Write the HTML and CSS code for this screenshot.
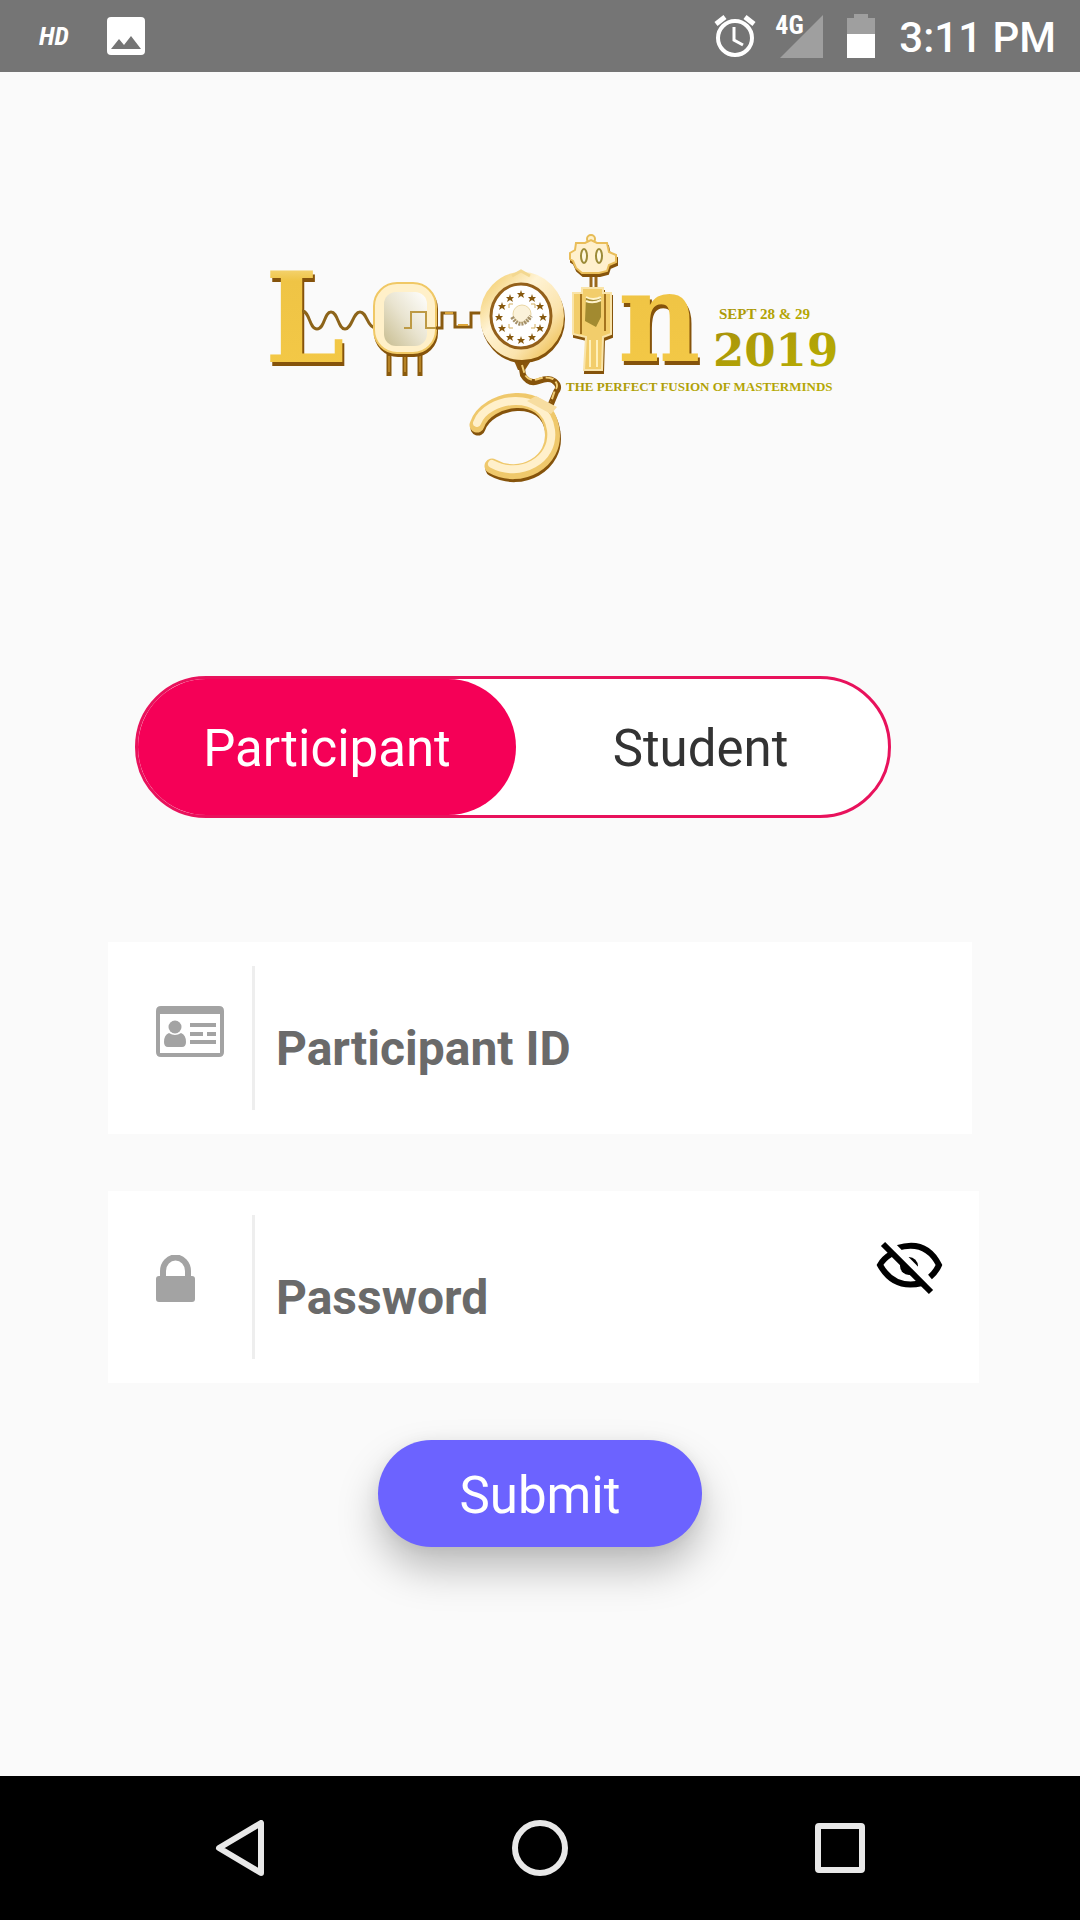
FILE: index.html
```html
<!DOCTYPE html>
<html lang="en">
<head>
<meta charset="utf-8">
<meta name="viewport" content="width=device-width, initial-scale=1">
<title>Login 2019</title>
<link rel="stylesheet" href="styles.css">
</head>
<body>
<header class="status">
  <span class="status-hd">HD</span>
  <svg class="status-image" viewBox="0 0 38 38" width="38" height="38" aria-hidden="true">
    <rect width="38" height="38" rx="4" fill="#fff"/>
    <path d="M4 32L12 22L17 28L24 19L34 32Z" fill="#757575"/>
  </svg>
  <div class="status-right">
    <svg class="status-alarm" viewBox="0 0 42 44" width="42" height="44" aria-hidden="true" fill="none" stroke="#fff">
      <circle cx="21" cy="24" r="17" stroke-width="4"/>
      <path d="M2 10L11 3M40 10L31 3" stroke-width="5"/>
      <path d="M20 13V26L29 31" stroke-width="3"/>
    </svg>
    <div class="signal">
      <svg viewBox="0 0 43 43" width="43" height="43" aria-hidden="true"><path d="M0 43L43 0V43Z" fill="#9f9f9f"/></svg>
      <span class="signal-label">4G</span>
    </div>
    <svg class="status-battery" viewBox="0 0 28 44" width="28" height="44" aria-hidden="true">
      <path d="M7 0H21V4H28V20H0V4H7Z" fill="#9f9f9f"/>
      <path d="M0 20H28V44H0Z" fill="#fff"/>
    </svg>
    <time class="status-time">3:11 PM</time>
  </div>
</header>

<main class="page">
  <svg class="logo" viewBox="264 228 580 258" role="img" aria-label="Login 2019">
    <defs>
      <linearGradient id="gold" x1="0" y1="0" x2="0" y2="1">
        <stop offset="0" stop-color="#fff2cc"/><stop offset=".25" stop-color="#efc445"/><stop offset=".85" stop-color="#f3c846"/><stop offset="1" stop-color="#f8d878"/>
      </linearGradient>
      <linearGradient id="pale" x1="0" y1="0" x2="1" y2="1">
        <stop offset="0" stop-color="#f3cd6c"/><stop offset=".35" stop-color="#fff3d4"/><stop offset=".7" stop-color="#fbe4ae"/><stop offset="1" stop-color="#eebe50"/>
      </linearGradient>
      <linearGradient id="chip" x1="1" y1="0" x2="0" y2="1">
        <stop offset="0" stop-color="#fff"/><stop offset=".5" stop-color="#e9e4d0"/><stop offset="1" stop-color="#c8bd90"/>
      </linearGradient>
      <linearGradient id="olive" x1="0" y1="0" x2="1" y2="1">
        <stop offset="0" stop-color="#a8920c"/><stop offset="1" stop-color="#b9b000"/>
      </linearGradient>
      <path id="star" d="M0 -4L1 -1L4 -1L2 1L3 4L0 2L-3 4L-2 1L-4 -1L-1 -1Z"/>
    </defs>

    <text class="logo-letter" x="265" y="362">L</text>
    <text class="logo-letter" x="618" y="361">n</text>

    <path d="M302 311C310 311 309 329 317 329S324 312 331 312S338 329 345 329S353 312 360 312S367 327 375 328" fill="none" stroke="#8d641a" stroke-width="3"/>

    <!-- chip with its legs and pulse -->
    <path d="M389 354V376M405 354V376M420 354V376" stroke="#8a5a0c" stroke-width="5"/>
    <path d="M389 356V372M405 356V372M420 356V372" stroke="#e0a93c" stroke-width="1"/>
    <rect class="bevel" x="374" y="283" width="62" height="70" rx="23" fill="#fff0c9" stroke="#f0c865" stroke-width="2"/>
    <rect x="384" y="292" width="43" height="54" rx="12" fill="url(#chip)"/>
    <path d="M404 328H411V312H426V328H436" fill="none" stroke="#bd9a45" stroke-width="2"/>
    <path d="M436 328H442V313H455V327H471V313H483" fill="none" stroke="#8a5b10" stroke-width="3"/>
    <path d="M445 313H453M458 325H468" stroke="#dca63b" stroke-width="2"/>

    <!-- upper cuff -->
    <path d="M512 356H534L525 370H518Z" fill="#8a560e"/>
    <ellipse class="bevel" cx="522" cy="316" rx="36" ry="38" fill="#fff" stroke="url(#pale)" stroke-width="12"/>
    <ellipse cx="521" cy="316" rx="30" ry="32" fill="#fff" stroke="#94601a" stroke-width="3"/>
    <path d="M512 276L521 271L530 276" fill="none" stroke="#f3d891" stroke-width="3"/>
    <g fill="#87590f">
      <use href="#star" x="521" y="294"/><use href="#star" x="532" y="298"/><use href="#star" x="540" y="306"/>
      <use href="#star" x="543" y="317"/><use href="#star" x="540" y="328"/><use href="#star" x="532" y="337"/>
      <use href="#star" x="521" y="340"/><use href="#star" x="510" y="337"/><use href="#star" x="502" y="328"/>
      <use href="#star" x="499" y="317"/><use href="#star" x="502" y="306"/><use href="#star" x="510" y="298"/>
    </g>
    <circle cx="522" cy="314" r="9" fill="#fbf2da" stroke="#ead7a5"/>
    <path d="M512 317Q521 331 531 316" fill="none" stroke="#a5916a" stroke-width="4" stroke-dasharray="2 1"/>
    <path d="M509 308V304H513M531 304H535V308M509 324V328H513M531 328H535V324" fill="none" stroke="#d1ad5e"/>

    <!-- chain and lower cuff -->
    <path d="M521 363L523 375Q529 385 539 381T554 381Q561 386 556 392L551 404" fill="none" stroke="#86530a" stroke-width="6" stroke-linecap="round"/>
    <path d="M522 365L525 375Q530 382 538 379T553 379Q560 385 555 390L551 402" fill="none" stroke="#f1cd76" stroke-width="2" stroke-dasharray="8 3"/>
    <path class="bevel" d="M477 425C486 397 547 386 552 430C557 462 520 482 492 466" fill="none" stroke="#efc86b" stroke-width="15" stroke-linecap="round"/>
    <path d="M477 423C486 397 545 388 551 430C555 460 520 479 492 464" fill="none" stroke="#fff0cb" stroke-width="8" stroke-linecap="round"/>
    <path d="M536 396L557 407L551 414L527 401Z" fill="#f7dda0"/>

    <!-- robot -->
    <path d="M591 275V289M596 275V289" stroke="#9a681b" stroke-width="3"/>
    <circle cx="591" cy="239" r="4" fill="#fff1c9" stroke="#e6bc57" stroke-width="2"/>
    <path class="bevel" d="M576 243H585L591 240L597 243H607L609 252L616 255V262L609 265L607 271L599 273H582L576 268L573 261L570 259V253L575 250Z" fill="#fff0cd" stroke="#e9bd59" stroke-width="2"/>
    <ellipse cx="584" cy="256" rx="3" ry="7" fill="#fff8df" stroke="#9c8b38" stroke-width="2"/>
    <ellipse cx="599" cy="256" rx="3" ry="7" fill="#fff8df" stroke="#9c8b38" stroke-width="2"/>
    <path class="bevel" d="M573 293H582V288H603V293H611V334L603 337L602 370H584L586 337L573 334Z" fill="#f2cd6b" stroke="#f9e4aa" stroke-width="2"/>
    <path d="M581 294V334M605 294V331" stroke="#a4731e" stroke-width="2"/>
    <path d="M586 297Q593 301 601 296V317L596 327L585 321Z" fill="#a28a30"/>
    <path d="M586 297Q593 301 601 297M586 301Q593 304 601 300" fill="none" stroke="#fff4cc" stroke-width="2"/>
    <path d="M590 340V367M597 340V367" stroke="#fff0b9" stroke-width="2"/>

    <text class="logo-small" x="719" y="319">SEPT 28 &amp; 29</text>
    <text class="logo-year" x="713" y="366">2019</text>
    <text class="logo-tag" x="566" y="391">THE PERFECT FUSION OF MASTERMINDS</text>
  </svg>

  <form class="login">
    <fieldset class="toggle">
      <label class="toggle-option"><input class="toggle-input" type="radio" name="role" checked><span class="toggle-text">Participant</span></label>
      <label class="toggle-option"><input class="toggle-input" type="radio" name="role"><span class="toggle-text">Student</span></label>
    </fieldset>

    <div class="field">
      <label class="field-icon" for="pid" aria-label="Participant ID">
        <svg viewBox="0 0 68 51" width="68" height="51" aria-hidden="true" fill="#a3a3a3">
          <path fill-rule="evenodd" d="M5 0H63Q68 0 68 5V46Q68 51 63 51H5Q0 51 0 46V5Q0 0 5 0ZM4 8V47H64V8Z"/>
          <circle cx="19" cy="21" r="6.500"/>
          <path d="M13 27Q19 31 25 27Q30 29 30 36Q30 41 26 41H12Q8 41 8 36Q8 29 13 27Z"/>
          <path d="M34 17H60V21H34ZM34 26H47V30H34ZM51 26H60V30H51ZM34 34H60V38H34Z"/>
        </svg>
      </label>
      <input class="field-input" id="pid" type="text" placeholder="Participant ID">
    </div>

    <div class="field field-password">
      <label class="field-icon" for="pwd" aria-label="Password">
        <svg viewBox="0 0 39 47" width="39" height="47" aria-hidden="true">
          <path d="M7 24V16A12 13 0 0 1 32 16V24" fill="none" stroke="#a3a3a3" stroke-width="6"/>
          <rect y="21" width="39" height="26" rx="3" fill="#a3a3a3"/>
        </svg>
      </label>
      <input class="field-input" id="pwd" type="password" placeholder="Password">
      <button class="reveal" type="button" aria-label="Show password">
        <svg viewBox="0 0 68 56" width="68" height="56" aria-hidden="true" fill="none" stroke="#000" stroke-width="6">
          <path d="M21 8Q50 -1 63 25Q60 32 54 37"/>
          <path d="M15 14Q7 19 4 25Q18 50 46 43"/>
          <circle cx="33" cy="26" r="9" fill="#000" stroke="none"/>
          <path d="M12 1L59 49" stroke="#fff" stroke-width="7"/>
          <path d="M7 4L55 52"/>
        </svg>
      </button>
    </div>

    <button class="submit" type="submit">Submit</button>
  </form>
</main>

<nav class="softkeys" aria-label="System">
  <button class="softkey" type="button" aria-label="Back">
    <svg viewBox="0 0 56 56" width="56" height="56" aria-hidden="true"><path d="M49 3V53L7 28Z" fill="none" stroke="#e8e8e8" stroke-width="6" stroke-linejoin="round"/></svg>
  </button>
  <button class="softkey" type="button" aria-label="Home">
    <svg viewBox="0 0 56 56" width="56" height="56" aria-hidden="true"><circle cx="28" cy="28" r="25" fill="none" stroke="#e8e8e8" stroke-width="6"/></svg>
  </button>
  <button class="softkey" type="button" aria-label="Recent apps">
    <svg viewBox="0 0 56 56" width="56" height="56" aria-hidden="true"><rect x="6" y="6" width="44" height="44" rx="1" fill="none" stroke="#e8e8e8" stroke-width="6"/></svg>
  </button>
</nav>
</body>
</html>
```
FILE: styles.css
```css
* {
  box-sizing: border-box;
}

body {
  display: flex;
  flex-direction: column;
  min-height: 100vh;
  margin: 0;
  background: #fafafa;
  font-family: Roboto, "Liberation Sans", sans-serif;
}

svg {
  display: block;
}

button,
input {
  font-family: inherit;
}

button {
  padding: 0;
  border: 0;
  background: none;
  cursor: pointer;
}

/* Status bar */
.status {
  display: flex;
  align-items: center;
  height: 72px;
  padding: 0 24px 0 39px;
  background: #757575;
  color: #fff;
}

.status-hd {
  width: 68px;
  font: italic 700 26px "Roboto Condensed", "Liberation Sans Narrow", Roboto, sans-serif;
}

.status-right {
  display: flex;
  align-items: center;
  gap: 24px;
  margin-left: auto;
}

.signal {
  position: relative;
}

.signal-label {
  position: absolute;
  top: -5px;
  left: -5px;
  font: 700 26px "Roboto Condensed", "Liberation Sans Narrow", Roboto, sans-serif;
}

.status-time {
  padding-top: 3px;
  font-size: 42px;
  font-weight: 500;
  line-height: 69px;
}

/* Logo */
.page {
  flex: 1;
  padding-bottom: 60px;
}

.logo {
  width: 580px;
  max-width: 100%;
  margin: 156px 236px 190px auto;
}

.logo-letter {
  fill: url(#gold);
  font: 700 126px "DejaVu Serif Condensed", "DejaVu Serif", serif;
  filter: drop-shadow(2px 4px 0 #85530b);
}

.bevel {
  filter: drop-shadow(1px 3px 0 #85530b);
}

.logo-small,
.logo-tag,
.logo-year {
  fill: url(#olive);
  font-family: "Liberation Serif", serif;
  font-weight: 700;
}

.logo-small {
  font-size: 15px;
}

.logo-tag {
  font-size: 13px;
}

.logo-year {
  font-family: "DejaVu Serif", serif;
  font-size: 45px;
}

/* Form */
.login {
  display: flex;
  flex-direction: column;
  gap: 57px;
  padding: 0 10%;
}

.toggle {
  display: flex;
  width: 756px;
  max-width: 100%;
  height: 142px;
  margin: 0 0 67px 27px;
  padding: 0;
  border: 3px solid #e8125c;
  border-radius: 71px;
  background: #fff;
}

.toggle-option {
  display: flex;
  flex: 1;
}

.toggle-input {
  position: absolute;
  opacity: 0;
}

.toggle-text {
  flex: 1;
  padding-top: 4px;
  border-radius: 68px;
  color: #333;
  font-size: 51px;
  line-height: 132px;
  text-align: center;
}

.toggle-input:checked + .toggle-text {
  margin-right: -3px;
  background: #f50057;
  color: #fff;
}

.field {
  display: flex;
  height: 192px;
  padding: 24px 0;
  background: #fff;
}

.field-password {
  margin-right: -7px;
}

.field-icon {
  flex: none;
  width: 147px;
  padding: 40px 0 0 48px;
  border-right: 3px solid #eee;
}

.field-input {
  flex: 1;
  min-width: 0;
  padding: 20px 21px 0;
  border: 0;
  background: none;
  color: #333;
  font-size: 48px;
  font-weight: 700;
}

.field-input::placeholder {
  color: #6a6a6a;
  opacity: 1;
}

.reveal {
  align-self: flex-start;
  margin: 25px 35px 0 0;
}

.submit {
  align-self: center;
  width: 324px;
  height: 107px;
  padding-top: 3px;
  border-radius: 54px;
  background: #6c63ff;
  box-shadow: 0 22px 40px rgba(0, 0, 0, 0.25), 0 2px 16px rgba(0, 0, 0, 0.06);
  color: #fff;
  font-size: 51px;
}

/* System navigation */
.softkeys {
  display: grid;
  grid-template-columns: repeat(3, 1fr);
  height: 144px;
  padding: 0 90px;
  background: #000;
}

.softkey {
  display: grid;
  place-items: center;
}
```
